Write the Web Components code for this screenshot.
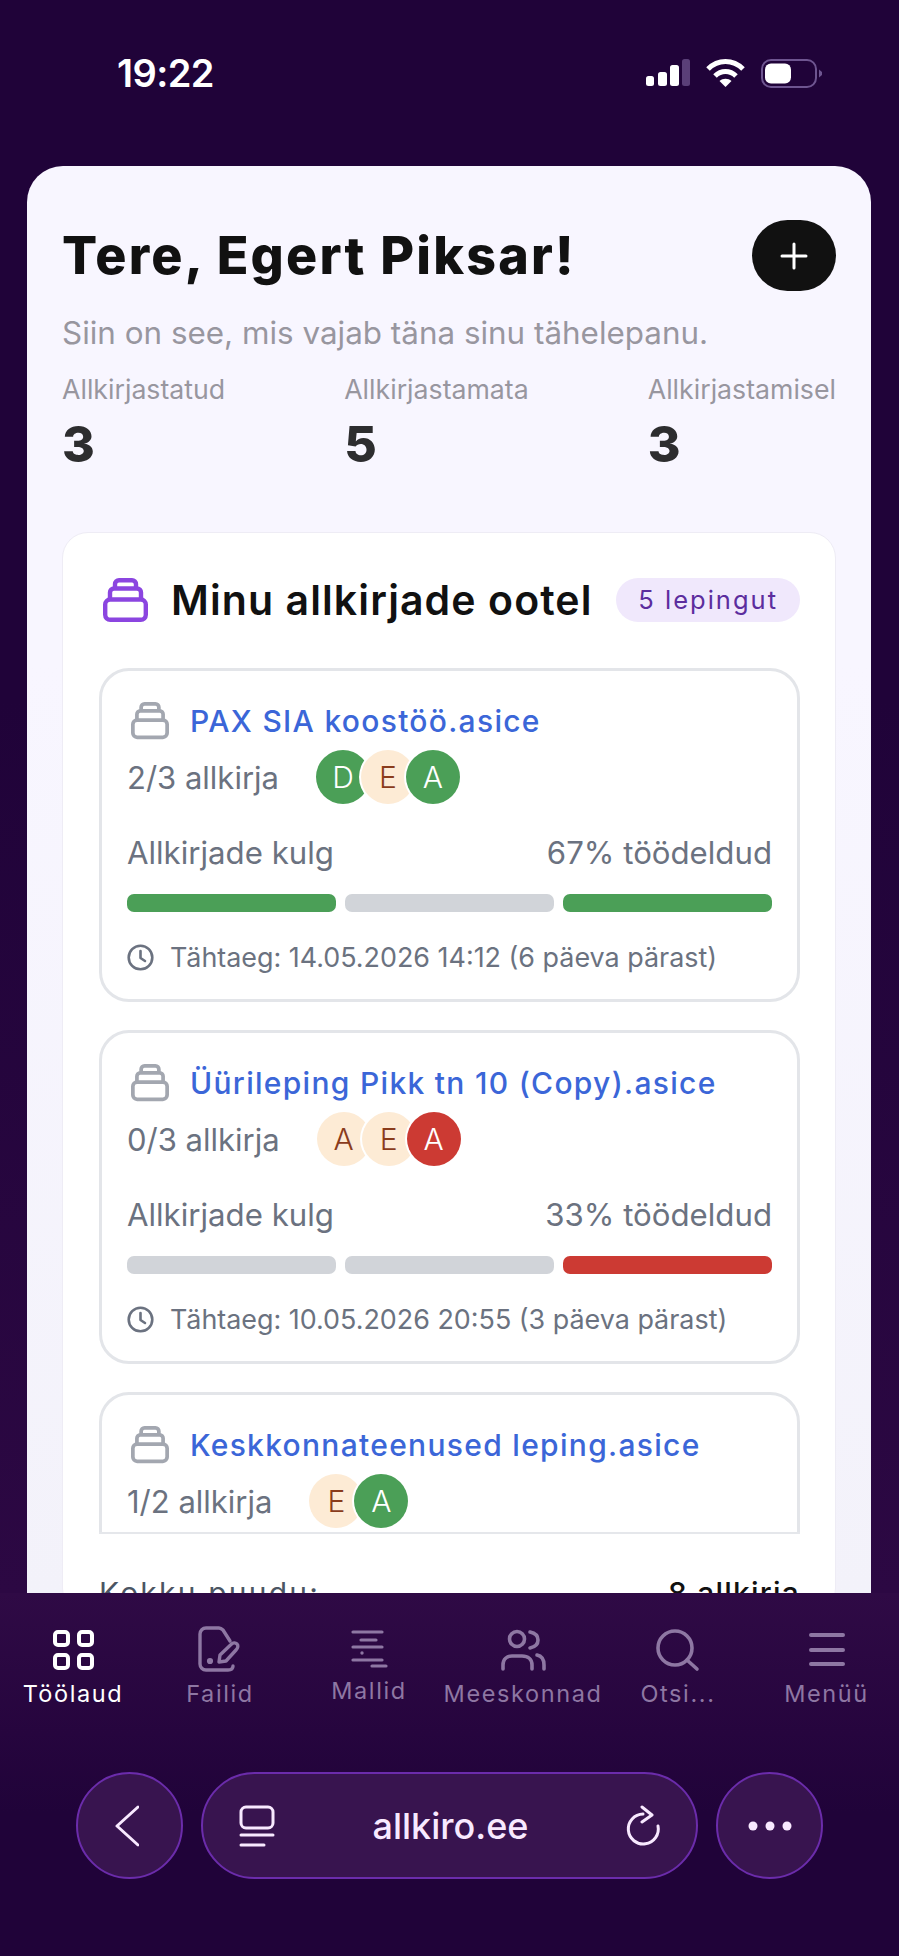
<!doctype html>
<html lang="et">
<head>
<meta charset="utf-8">
<title>Allkiro</title>
<style>
  html, body { margin: 0; padding: 0; background: #200339; }
  body { font-family: Inter, "Liberation Sans", sans-serif; }
</style>
</head>
<body>
<app-shell>
  <status-bar time="19:22" slot="status"></status-bar>
  <hero-card slot="main" name="Tere, Egert Piksar!" note="Siin on see, mis vajab täna sinu tähelepanu.">
    <stat-item label="Allkirjastatud" value="3" slot="stats"></stat-item>
    <stat-item label="Allkirjastamata" value="5" slot="stats"></stat-item>
    <stat-item label="Allkirjastamisel" value="3" slot="stats"></stat-item>
    <pending-panel heading="Minu allkirjade ootel" badge="5 lepingut" total-label="Kokku puudu:" total="8 allkirja">
      <contract-card name="PAX SIA koostöö.asice" count="2/3 allkirja" percent="67% töödeldud" bars="green,gray,green" deadline="Tähtaeg: 14.05.2026 14:12 (6 päeva pärast)">
        <sig-avatar tone="green">D</sig-avatar><sig-avatar tone="peach">E</sig-avatar><sig-avatar tone="green">A</sig-avatar>
      </contract-card>
      <contract-card name="Üürileping Pikk tn 10 (Copy).asice" count="0/3 allkirja" percent="33% töödeldud" bars="gray,gray,red" deadline="Tähtaeg: 10.05.2026 20:55 (3 päeva pärast)">
        <sig-avatar tone="peach">A</sig-avatar><sig-avatar tone="peach">E</sig-avatar><sig-avatar tone="red">A</sig-avatar>
      </contract-card>
      <contract-card name="Keskkonnateenused leping.asice" count="1/2 allkirja">
        <sig-avatar tone="peach">E</sig-avatar><sig-avatar tone="green">A</sig-avatar>
      </contract-card>
    </pending-panel>
  </hero-card>
  <bottom-nav slot="nav">
    <nav-item label="Töölaud" icon="grid" active></nav-item>
    <nav-item label="Failid" icon="file"></nav-item>
    <nav-item label="Mallid" icon="lines" raised></nav-item>
    <nav-item label="Meeskonnad" icon="team"></nav-item>
    <nav-item label="Otsi..." icon="search"></nav-item>
    <nav-item label="Menüü" icon="menu"></nav-item>
  </bottom-nav>
  <browser-bar slot="browser" url="allkiro.ee"></browser-bar>
</app-shell>

<script>
const HEAD_FONT = 'Inter, "Liberation Sans", sans-serif'

const STACK_ICON = (color, width) => `
  <svg viewBox="0 0 45 44" width="${width}" fill="none" stroke="${color}" stroke-width="4.4" stroke-linejoin="round">
    <rect x="2.200" y="21.500" width="40.600" height="20.300" rx="5"/>
    <path d="M7 21.500v-7a4 4 0 0 1 4-4h23a4 4 0 0 1 4 4v7"/>
    <path d="M12 10.500V6.200a4 4 0 0 1 4-4h13a4 4 0 0 1 4 4v4.300"/>
  </svg>`

const NAV_ICONS = {
  grid: `<svg width="44" height="44" viewBox="0 0 44 44" fill="none" stroke="currentColor" stroke-width="4">
      <rect x="4" y="5" width="13" height="13" rx="3"/><rect x="28" y="5" width="13" height="13" rx="3"/>
      <rect x="4" y="28" width="13" height="13" rx="3"/><rect x="28" y="28" width="13" height="13" rx="3"/></svg>`,
  file: `<svg width="44" height="46" viewBox="0 0 44 46" fill="none" stroke="currentColor" stroke-width="3.4" stroke-linecap="round" stroke-linejoin="round">
      <path d="M32 15l-7-11c-1-1-2-2-4-2H8a6 6 0 0 0-6 6v30a6 6 0 0 0 6 6h22c3 0 5-1 5-4"/>
      <path d="M21 36l1-7L33 18.500c2-2 4.500-2 6-.5s1 4-1 6L28 35z"/>
      <circle cx="12" cy="35" r="1.400" fill="currentColor"/></svg>`,
  lines: `<svg width="40" height="42" viewBox="0 0 40 42" fill="none" stroke="currentColor" stroke-width="3.200" stroke-linecap="round">
      <path d="M4 4h29M12 12h15M4 19h29M4 32h29M23 38h14"/><circle cx="13" cy="25" r="1.700" fill="currentColor" stroke="none"/></svg>`,
  team: `<svg width="48" height="44" viewBox="0 0 48 44" fill="none" stroke="currentColor" stroke-width="3.600" stroke-linecap="round">
      <circle cx="18" cy="12" r="7.500"/>
      <path d="M31 5c5 1 8 4 8 8s-3 7-8 8"/>
      <path d="M4 42v-4c0-6 4-9 9-9h10c6 0 10 3 10 9v4"/>
      <path d="M38 28c5 1 7 5 7 10v4"/></svg>`,
  search: `<svg width="46" height="46" viewBox="0 0 46 46" fill="none" stroke="currentColor" stroke-width="3.600" stroke-linecap="round">
      <circle cx="20" cy="22" r="17"/><path d="M32 34l10 9"/></svg>`,
  menu: `<svg width="38" height="36" viewBox="0 0 38 36" fill="none" stroke="currentColor" stroke-width="4" stroke-linecap="round">
      <path d="M3 4h32M3 19h32M3 33h32"/></svg>`
}

class AppShell extends HTMLElement {
  constructor() {
    super()
    this._root = this.attachShadow({ mode: "open" })
  }

  connectedCallback() {
    this._root.innerHTML = `
      <style>
        :host {
          display: flex;
          flex-direction: column;
          width: 899px;
          height: 1956px;
          overflow: hidden;
          background: linear-gradient(#200339 0, #200339 700px, #2c0843 1593px);
        }
        .status { flex: 0 0 166px; }
        .main {
          flex: 0 0 1427px;
          overflow: hidden;
          padding: 0 28px 0 27px;
          box-sizing: border-box;
        }
        .bottom {
          flex: 1;
          display: flex;
          flex-direction: column;
          background: linear-gradient(#2f0a45 0, #26053e 140px, #200339 220px);
        }
      </style>
      <div class="status"><slot name="status"></slot></div>
      <div class="main"><slot name="main"></slot></div>
      <div class="bottom"><slot name="nav"></slot><slot name="browser"></slot></div>
    `
  }
}

class StatusBar extends HTMLElement {
  constructor() {
    super()
    this._root = this.attachShadow({ mode: "open" })
  }

  connectedCallback() {
    this._root.innerHTML = `
      <style>
        :host {
          display: flex;
          justify-content: space-between;
          align-items: flex-start;
          height: 166px;
          padding: 50px 76px 0 117px;
          box-sizing: border-box;
          color: #fff;
        }
        .time {
          font: 600 38px/46px Inter, sans-serif;
          letter-spacing: -.6px;
        }
        .icons { display: flex; align-items: center; gap: 16px; padding-top: 8px; }
      </style>
      <div class="time">${this.getAttribute("time")}</div>
      <div class="icons">
        <svg width="44" height="28" viewBox="0 0 44 28" fill="#fff">
          <rect x="0" y="17" width="8" height="10" rx="2.500"/>
          <rect x="12" y="13" width="9" height="14" rx="2.500"/>
          <rect x="24" y="6" width="9" height="21" rx="2.500"/>
          <rect x="36" y="0" width="8" height="27" rx="2.500" fill="#5a3f78"/>
        </svg>
        <svg width="39" height="30" viewBox="0 0 39 30" fill="none" stroke="#fff" stroke-width="5">
          <path d="M2 11C12 1 27 1 37 11"/>
          <path d="M9 18c6-6 15-6 21 0"/>
          <path d="M19.500 29l-6-6c3.400-3 8.600-3 12 0z" fill="#fff" stroke="none"/>
        </svg>
        <svg width="62" height="29" viewBox="0 0 62 29" fill="none">
          <rect x="1" y="1" width="54" height="27" rx="9" stroke="#6e5590" stroke-width="2"/>
          <rect x="4" y="4.500" width="26" height="20" rx="6" fill="#fff"/>
          <path d="M58 10.500l3 2.500v3l-3 2.500z" fill="#6e5590"/>
        </svg>
      </div>
    `
  }
}

class HeroCard extends HTMLElement {
  constructor() {
    super()
    this._root = this.attachShadow({ mode: "open" })
  }

  connectedCallback() {
    this._root.innerHTML = `
      <style>
        :host {
          display: block;
          height: 1480px;
          padding: 54px 35px 0;
          box-sizing: border-box;
          background: linear-gradient(#f8f6ff 0, #f8f6ff 500px, #f3f2fa 1427px);
          border-radius: 36px 36px 0 0;
        }
        .top { display: flex; justify-content: space-between; align-items: center; height: 71px; }
        h1 {
          margin: 0;
          font: 800 52px/60px ${HEAD_FONT};
          color: #111;
          letter-spacing: 2.2px;
        }
        button {
          width: 84px;
          height: 71px;
          border: 0;
          border-radius: 36px;
          background: #111;
          padding: 0;
          display: flex;
          align-items: center;
          justify-content: center;
        }
        p {
          margin: 22px 0 0;
          font: 400 31.4px/40px Inter, sans-serif;
          color: #98969f;
        }
        .stats { display: flex; justify-content: space-between; margin-top: 20px; height: 159px; }
      </style>
      <div class="top">
        <h1>${this.getAttribute("name")}</h1>
        <button aria-label="Lisa">
          <svg width="28" height="28" viewBox="0 0 28 28" stroke="#fff" stroke-width="3" stroke-linecap="round"><path d="M14 2v24M2 14h24"/></svg>
        </button>
      </div>
      <p>${this.getAttribute("note")}</p>
      <div class="stats"><slot name="stats"></slot></div>
      <slot></slot>
    `
  }
}

class StatItem extends HTMLElement {
  constructor() {
    super()
    this._root = this.attachShadow({ mode: "open" })
  }

  connectedCallback() {
    this._root.innerHTML = `
      <style>
        :host { display: block; }
        .label { font: 400 26.7px/32px Inter, sans-serif; color: #98969f; }
        .value { font: 800 50px/56px ${HEAD_FONT}; color: #2d2d2f; margin-top: 11px; }
      </style>
      <div class="label">${this.getAttribute("label")}</div>
      <div class="value">${this.getAttribute("value")}</div>
    `
  }
}

class PendingPanel extends HTMLElement {
  constructor() {
    super()
    this._root = this.attachShadow({ mode: "open" })
  }

  connectedCallback() {
    this._root.innerHTML = `
      <style>
        :host {
          display: block;
          background: #fff;
          border: 1px solid #eeecf5;
          border-radius: 26px;
          padding: 45px 35px 0 36px;
        }
        .head { display: flex; align-items: center; height: 44px; padding-left: 4px; }
        h2 {
          margin: 0 0 0 23px;
          font: 600 41px/44px ${HEAD_FONT};
          letter-spacing: 1.1px;
          color: #111;
          flex: 1;
          white-space: nowrap;
        }
        .badge {
          font: 400 25.5px/44px ${HEAD_FONT};
          letter-spacing: 2px;
          color: #5c2d9e;
          background: #f0e8fc;
          border-radius: 22px;
          padding: 0 22px;
          white-space: nowrap;
        }
        .list {
          margin-top: 46px;
          height: 866px;
          overflow: hidden;
          display: flex;
          flex-direction: column;
          gap: 28px;
          border-bottom: 2px solid #e5e7eb;
          box-sizing: border-box;
        }
        .total {
          display: flex;
          justify-content: space-between;
          margin-top: 39px;
          font: 400 30px/40px Inter, sans-serif;
          letter-spacing: 2.2px;
          color: #4b5563;
        }
        .total b { font-weight: 500; letter-spacing: 1.2px; color: #111; }
      </style>
      <div class="head">
        ${STACK_ICON("#8b45e0", 45)}
        <h2>${this.getAttribute("heading")}</h2>
        <span class="badge">${this.getAttribute("badge")}</span>
      </div>
      <div class="list"><slot></slot></div>
      <div class="total"><span>${this.getAttribute("total-label")}</span><b>${this.getAttribute("total")}</b></div>
    `
  }
}

class ContractCard extends HTMLElement {
  constructor() {
    super()
    this._root = this.attachShadow({ mode: "open" })
  }

  connectedCallback() {
    const barList = this.getAttribute("bars")
    // the third card is cut off by the list, so it has no lower rows
    const progress = barList ? `
      <div class="kulg"><span>Allkirjade kulg</span><span>${this.getAttribute("percent")}</span></div>
      <div class="bars">${barList.split(",").map((tone) => `<i class="${tone}"></i>`).join("")}</div>
      <div class="due">
        <svg width="27" height="27" viewBox="0 0 27 27" fill="none" stroke="#6b7280" stroke-width="2.600" stroke-linecap="round" stroke-linejoin="round">
          <circle cx="13.500" cy="13.500" r="11.800"/><path d="M13.500 7v7l4.500 3"/>
        </svg>
        <span>${this.getAttribute("deadline")}</span>
      </div>` : ""
    this._root.innerHTML = `
      <style>
        :host {
          display: block;
          flex: none;
          height: 334px;
          border: 3px solid #e3e5e9;
          border-radius: 30px;
          padding: 28px 25px 0;
          box-sizing: border-box;
          background: #fff;
          color: #6b7280;
          font-family: Inter, sans-serif;
        }
        .name { display: flex; align-items: center; height: 44px; }
        .name svg { margin: 0 21px 0 4px; flex: none; }
        .name a {
          font: 500 30px/40px ${HEAD_FONT};
          letter-spacing: 1.3px;
          color: #3b66d8;
          white-space: nowrap;
        }
        .sign { display: flex; align-items: center; height: 54px; margin-top: 7px; font-size: 31px; }
        .sign .who { display: flex; margin-left: 37px; }
        .kulg { display: flex; justify-content: space-between; margin-top: 29px; font: 400 31.2px/40px Inter, sans-serif; }
        .bars { display: flex; gap: 9px; margin-top: 21px; }
        .bars i { flex: 1; height: 18px; border-radius: 7px; }
        .green { background: #4b9f57; }
        .gray { background: #d1d4d9; }
        .red { background: #cc3a33; }
        .due { display: flex; align-items: center; margin-top: 30px; font: 400 26.9px/30px Inter, sans-serif; }
        .due svg { margin-right: 16px; flex: none; }
      </style>
      <div class="name">
        ${STACK_ICON("#a3a7b0", 38)}
        <a>${this.getAttribute("name")}</a>
      </div>
      <div class="sign">
        <span>${this.getAttribute("count")}</span>
        <span class="who"><slot></slot></span>
      </div>
      ${progress}
    `
  }
}

class SigAvatar extends HTMLElement {
  constructor() {
    super()
    this._root = this.attachShadow({ mode: "open" })
  }

  connectedCallback() {
    this._root.innerHTML = `
      <style>
        :host {
          display: flex;
          align-items: center;
          justify-content: center;
          position: relative;
          width: 54px;
          height: 54px;
          border-radius: 50%;
          box-shadow: 0 0 0 2px #fff;
          font: 300 30px/1 Inter, sans-serif;
        }
        :host(:not(:first-child)) { margin-left: -9px; }
        :host([tone="green"]) { background: #4b9f57; color: #fff; }
        :host([tone="red"]) { background: #cc3a33; color: #fff; }
        :host([tone="peach"]) { background: #fdebd5; color: #8a3c1c; }
      </style>
      <slot></slot>
    `
  }
}

class BottomNav extends HTMLElement {
  constructor() {
    super()
    this._root = this.attachShadow({ mode: "open" })
  }

  connectedCallback() {
    this._root.innerHTML = `
      <style>
        :host {
          display: grid;
          grid-template-columns: 146px 148px 150px 158px 152px 145px;
          height: 179px;
          padding-top: 33px;
          box-sizing: border-box;
        }
      </style>
      <slot></slot>
    `
  }
}

class NavItem extends HTMLElement {
  constructor() {
    super()
    this._root = this.attachShadow({ mode: "open" })
  }

  connectedCallback() {
    this._root.innerHTML = `
      <style>
        :host {
          display: flex;
          flex-direction: column;
          align-items: center;
          color: #8e77a3;
        }
        :host([active]) { color: #fff; }
        .icon { height: 46px; display: flex; align-items: center; justify-content: center; }
        .label { font: 400 23.5px/30px ${HEAD_FONT}; letter-spacing: 1.6px; margin-top: 7px; white-space: nowrap; }
        :host([raised]) .label { margin-top: 4px; }
      </style>
      <div class="icon">${NAV_ICONS[this.getAttribute("icon")]}</div>
      <div class="label">${this.getAttribute("label")}</div>
    `
  }
}

class BrowserBar extends HTMLElement {
  constructor() {
    super()
    this._root = this.attachShadow({ mode: "open" })
  }

  connectedCallback() {
    this._root.innerHTML = `
      <style>
        :host {
          display: flex;
          justify-content: center;
          gap: 18px;
          padding: 0 76px;
          box-sizing: border-box;
          color: #f8e9ff;
        }
        .round, .url {
          height: 107px;
          box-sizing: border-box;
          border: 2px solid #6b2cab;
          background: #38144f;
          border-radius: 54px;
          display: flex;
          align-items: center;
        }
        .round { width: 107px; justify-content: center; flex: none; }
        .url { flex: 1; padding: 0 34px 0 36px; justify-content: space-between; }
        .url span { font: 500 36px/44px Inter, sans-serif; }
        .back { margin-right: 6px; }
      </style>
      <div class="round">
        <svg class="back" width="24" height="42" viewBox="0 0 24 42" fill="none" stroke="currentColor" stroke-width="3" stroke-linecap="round" stroke-linejoin="round"><path d="M23 2L2 21l21 19"/></svg>
      </div>
      <div class="url">
        <svg width="36" height="42" viewBox="0 0 36 42" fill="none" stroke="currentColor" stroke-width="3" stroke-linecap="round">
          <rect x="2" y="2" width="32" height="21" rx="5"/><path d="M2 30h32M2 40h23"/>
        </svg>
        <span>${this.getAttribute("url")}</span>
        <svg width="36" height="42" viewBox="0 0 36 42" fill="none" stroke="currentColor" stroke-width="3" stroke-linecap="round" stroke-linejoin="round">
          <path d="M17 9A15 15 0 1 0 32 21"/><path d="M16 2l10 8-10 7"/>
        </svg>
      </div>
      <div class="round">
        <svg width="44" height="10" viewBox="0 0 44 10" fill="currentColor"><circle cx="5" cy="5" r="4.500"/><circle cx="22" cy="5" r="4.500"/><circle cx="39" cy="5" r="4.500"/></svg>
      </div>
    `
  }
}

customElements.define("app-shell", AppShell)
customElements.define("status-bar", StatusBar)
customElements.define("hero-card", HeroCard)
customElements.define("stat-item", StatItem)
customElements.define("pending-panel", PendingPanel)
customElements.define("contract-card", ContractCard)
customElements.define("sig-avatar", SigAvatar)
customElements.define("bottom-nav", BottomNav)
customElements.define("nav-item", NavItem)
customElements.define("browser-bar", BrowserBar)
</script>
</body>
</html>
